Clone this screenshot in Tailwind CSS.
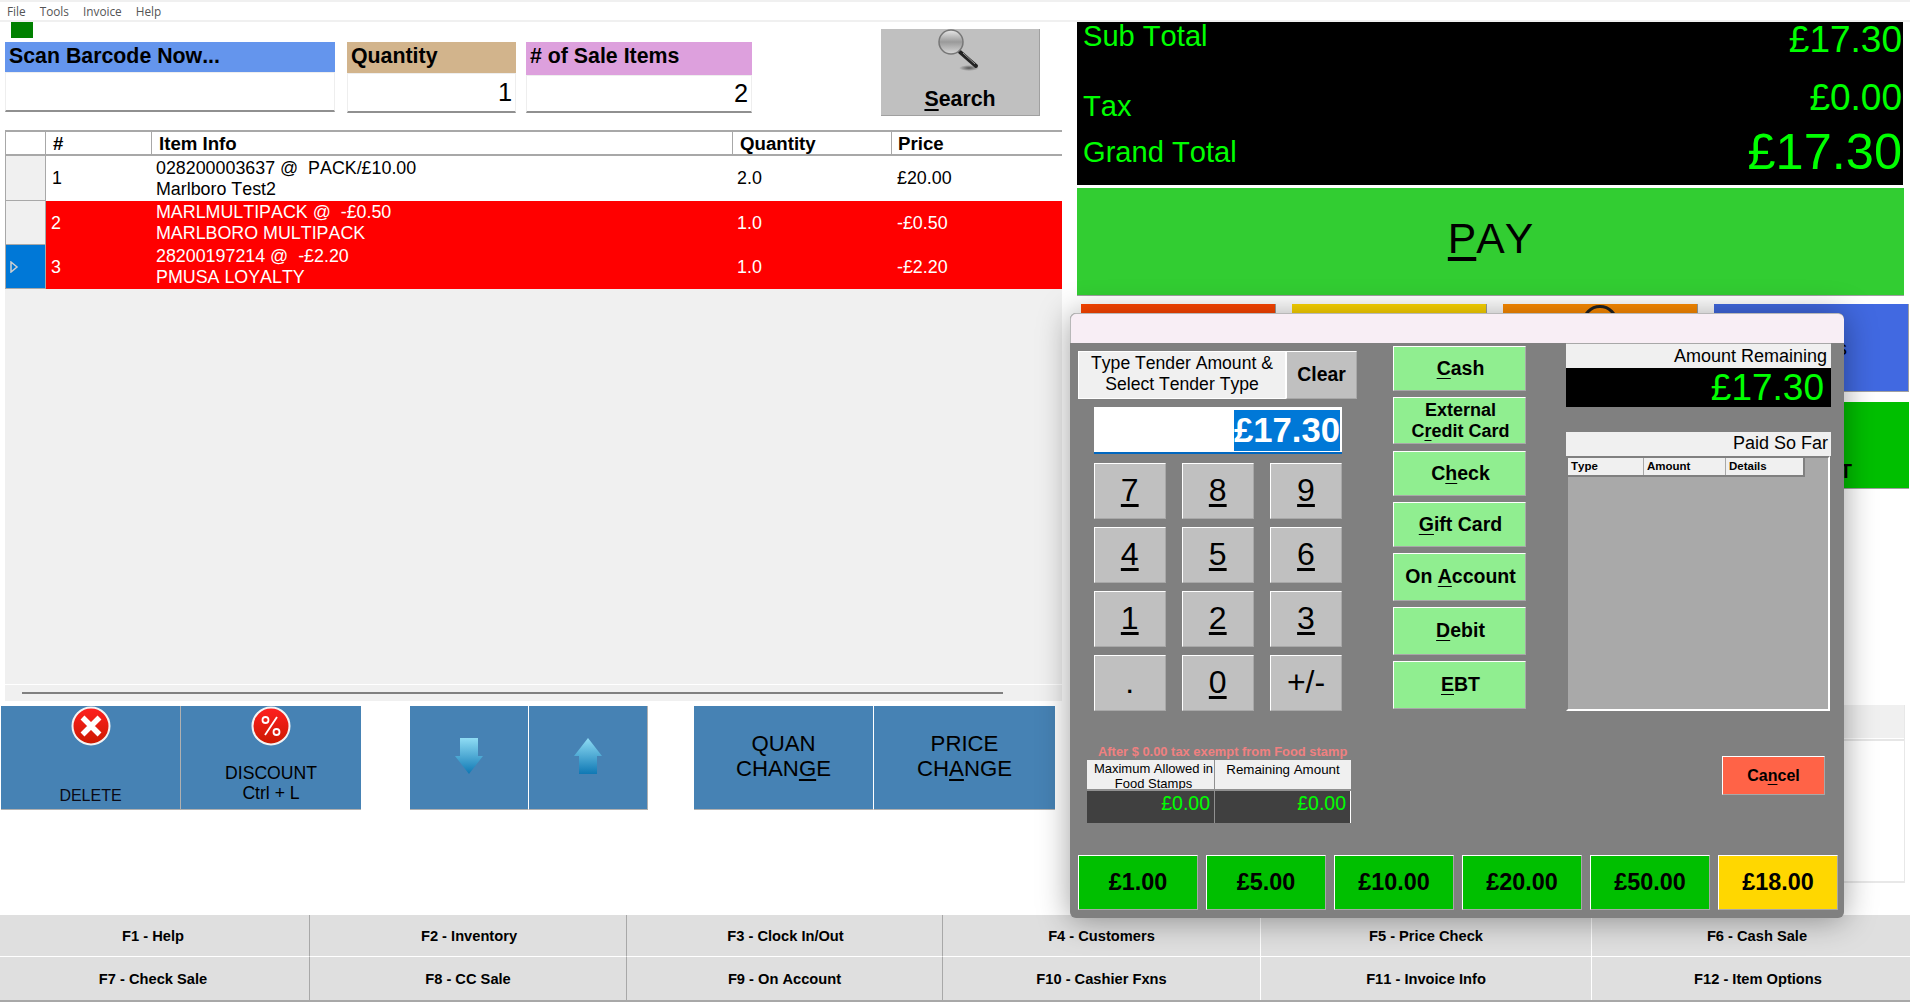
<!DOCTYPE html>
<html lang="en">
  <head>
    <meta charset="UTF-8" />
    <title>Point of Sale</title>
    <script src="https://cdn.jsdelivr.net/npm/@tailwindcss/browser@4"></script>
  </head>
  <body class="bg-white overflow-hidden">
    <div class="relative w-[1910px] h-[1008px] overflow-hidden bg-white text-black [font-kerning:none] font-['Liberation_Sans',Arial,sans-serif]">
      <!-- menu -->
      <div class="h-[22px] border-t-2 border-b-2 border-[#f0f0f0] flex items-center gap-[14px] pl-[7px] pt-px text-[11.8px] text-[#555] font-['Open_Sans',sans-serif]">
        <span>File</span><span>Tools</span><span>Invoice</span><span>Help</span>
      </div>

      <div class="flex h-[893px]">
        <!-- left side -->
        <div class="w-[1062px] shrink-0 flex flex-col">
          <div class="flex h-[108px] shrink-0">
            <div class="w-[881px] shrink-0">
              <div class="ml-[11px] w-[22px] h-[16px] bg-[#008000]"></div>
              <div class="flex items-start ml-[5px] mt-[4px]">
                <div class="w-[330px]">
                  <div class="h-[30px] bg-[#6495ed] pl-[4px] flex items-center text-[21.33px] font-bold">Scan Barcode Now...</div>
                  <div class="h-[40px] bg-white border border-[#eeeeee] border-b-2 border-b-[#909090]"></div>
                </div>
                <div class="w-[169px] ml-[12px]">
                  <div class="h-[31px] bg-[#d2b48c] pl-[4px] pb-[2px] flex items-center text-[21.33px] font-bold">Quantity</div>
                  <div class="h-[40px] bg-white border border-[#eeeeee] border-b-2 border-b-[#909090] flex items-center justify-end pr-[3px] text-[25.33px]">1</div>
                </div>
                <div class="w-[226px] ml-[10px]">
                  <div class="h-[33px] bg-[#dda0dd] pl-[4px] pb-[4px] flex items-center text-[21.33px] font-bold"># of Sale Items</div>
                  <div class="h-[38px] bg-white border border-[#eeeeee] border-b-2 border-b-[#909090] flex items-center justify-end pr-[3px] text-[25.33px]">2</div>
                </div>
              </div>
            </div>
            <button class="mt-[7px] w-[159px] h-[87px] bg-[#c0c0c0] border-b border-r border-[#a0a0a0] flex flex-col items-center">
              <svg class="w-[44px] h-[46px] ml-[-2px]" viewBox="0 0 44 46">
                <defs>
                  <linearGradient id="glass" x1="0" y1="0" x2="0" y2="1">
                    <stop offset="0" stop-color="#e8e8e8" /><stop offset="0.5" stop-color="#9a9a9a" /><stop offset="1" stop-color="#d8d8d8" />
                  </linearGradient>
                  <radialGradient id="floor"><stop offset="0" stop-color="#555" /><stop offset="1" stop-color="#c0c0c0" /></radialGradient>
                </defs>
                <ellipse cx="32" cy="39" rx="10" ry="3" fill="url(#floor)" />
                <path d="M23 23 L39 37" stroke="#222" stroke-width="4" stroke-linecap="round" />
                <path d="M26 24 L38 35" stroke="#999" stroke-width="1" />
                <circle cx="14" cy="13" r="12" fill="url(#glass)" stroke="#777" stroke-width="1.5" />
              </svg>
              <span class="mt-[12px] text-[21.33px] leading-[24px] font-bold"><span class="underline underline-offset-[3px]">S</span>earch</span>
            </button>
          </div>

          <!-- sale grid -->
          <div class="ml-[5px] h-[554px] shrink-0 bg-[#f0f0f0]">
            <div class="grid grid-cols-[40px_106px_581px_159px_1fr] border-t-2 border-l border-[#a8a8a8]">
              <div class="h-[24px] bg-white border-b-2 border-r border-[#a8a8a8]"></div>
              <div class="h-[24px] bg-white border-b-2 border-r border-[#a8a8a8] pl-[7px] text-[18.67px] leading-[24px] font-bold">#</div>
              <div class="h-[24px] bg-white border-b-2 border-r border-[#a8a8a8] pl-[7px] text-[18.67px] leading-[24px] font-bold">Item Info</div>
              <div class="h-[24px] bg-white border-b-2 border-r border-[#a8a8a8] pl-[7px] text-[18.67px] leading-[24px] font-bold">Quantity</div>
              <div class="h-[24px] bg-white border-b-2 border-[#a8a8a8] pl-[6px] text-[18.67px] leading-[24px] font-bold">Price</div>

              <div class="h-[45px] bg-[#f0f0f0] border-r border-b border-[#a8a8a8]"></div>
              <div class="h-[45px] bg-white pl-[6px] flex items-center text-[17.85px]">1</div>
              <div class="h-[45px] bg-white pl-[4px] flex flex-col justify-center text-[17.85px] leading-[21px]"><span class="whitespace-pre">028200003637 @  PACK/£10.00</span><span>Marlboro Test2</span></div>
              <div class="h-[45px] bg-white pl-[4px] flex items-center text-[17.85px]">2.0</div>
              <div class="h-[45px] bg-white pl-[5px] flex items-center text-[17.85px]">£20.00</div>

              <div class="h-[44px] bg-[#f0f0f0] border-r border-b border-[#a8a8a8]"></div>
              <div class="h-[44px] bg-[#ff0000] text-white pl-[5px] flex items-center text-[17.85px]">2</div>
              <div class="h-[44px] bg-[#ff0000] text-white pl-[4px] flex flex-col justify-center text-[17.85px] leading-[21px]"><span class="whitespace-pre">MARLMULTIPACK @  -£0.50</span><span>MARLBORO MULTIPACK</span></div>
              <div class="h-[44px] bg-[#ff0000] text-white pl-[4px] flex items-center text-[17.85px]">1.0</div>
              <div class="h-[44px] bg-[#ff0000] text-white pl-[5px] flex items-center text-[17.85px]">-£0.50</div>

              <div class="h-[44px] bg-[#0078d7] border-r border-b border-[#a8a8a8] flex items-center pl-[4px]">
                <svg class="w-[9px] h-[12px]" viewBox="0 0 9 12"><path d="M1 1 L7 6 L1 11 Z" fill="none" stroke="#d0d0d0" stroke-width="1.5" /></svg>
              </div>
              <div class="h-[44px] bg-[#ff0000] text-white pl-[5px] flex items-center text-[17.85px]">3</div>
              <div class="h-[44px] bg-[#ff0000] text-white pl-[4px] flex flex-col justify-center text-[17.85px] leading-[21px]"><span class="whitespace-pre">28200197214 @  -£2.20</span><span>PMUSA LOYALTY</span></div>
              <div class="h-[44px] bg-[#ff0000] text-white pl-[4px] flex items-center text-[17.85px]">1.0</div>
              <div class="h-[44px] bg-[#ff0000] text-white pl-[5px] flex items-center text-[17.85px]">-£2.20</div>
            </div>
          </div>

          <!-- scrollbar -->
          <div class="ml-[5px] mt-px h-[16px] bg-[#f0f0f0] flex items-center pl-[17px]">
            <div class="w-[981px] h-[2px] bg-[#808080]"></div>
          </div>

          <!-- action buttons -->
          <div class="flex mt-[5px] h-[104px] text-black">
            <div class="ml-px w-[360px] flex">
              <div class="relative w-[180px] bg-[#4682b4] border-b border-r border-[#b0b0b0] flex flex-col items-center">
                <svg class="w-[40px] h-[40px]" viewBox="0 0 40 40">
                  <defs>
                    <linearGradient id="red1" x1="0" y1="0" x2="0" y2="1"><stop offset="0" stop-color="#ff2020" /><stop offset="1" stop-color="#cc1a00" /></linearGradient>
                  </defs>
                  <circle cx="20" cy="20" r="18.5" fill="url(#red1)" stroke="#f4f4f4" stroke-width="2" />
                  <path d="M11.5 11.5 L28.5 28.5 M28.5 11.5 L11.5 28.5" stroke="#fff" stroke-width="5.5" />
                </svg>
                <span class="mt-[40px] text-[16px] leading-[20px] text-[#0a0a14]">DELETE</span>
              </div>
              <div class="w-[180px] bg-[#4682b4] border-b border-[#b0b0b0] flex flex-col items-center">
                <svg class="w-[40px] h-[40px]" viewBox="0 0 40 40">
                  <circle cx="20" cy="20" r="18.5" fill="url(#red1)" stroke="#f4f4f4" stroke-width="2" />
                  <circle cx="14.5" cy="14" r="3" fill="none" stroke="#fff" stroke-width="1.8" />
                  <circle cx="25.5" cy="26" r="3" fill="none" stroke="#fff" stroke-width="1.8" />
                  <path d="M26 11 L14 29" stroke="#fff" stroke-width="1.8" />
                </svg>
                <span class="mt-[17px] text-[17.6px] leading-[20px] text-center">DISCOUNT<br />Ctrl + L</span>
              </div>
            </div>
            <div class="ml-[49px] w-[238px] flex">
              <div class="w-[119px] bg-[#4682b4] border-b border-r border-[#b0b0b0] border-r-white flex items-center justify-center">
                <svg class="w-[30px] h-[36px] mt-[-4px]" viewBox="0 0 30 36">
                  <defs>
                    <linearGradient id="arrow" x1="0" y1="0" x2="0" y2="1"><stop offset="0" stop-color="#8fdcf4" /><stop offset="1" stop-color="#0f78b4" /></linearGradient>
                  </defs>
                  <path d="M6 0 H24 V18 H29 L15 36 L1 18 H6 Z" fill="url(#arrow)" />
                </svg>
              </div>
              <div class="w-[119px] bg-[#4682b4] border-b border-r border-[#b0b0b0] flex items-center justify-center">
                <svg class="w-[30px] h-[36px] mt-[-4px]" viewBox="0 0 30 36">
                  <path d="M15 0 L29 18 H24 V36 H6 V18 H1 Z" fill="url(#arrow)" />
                </svg>
              </div>
            </div>
            <div class="ml-[46px] w-[361px] flex">
              <div class="w-[180px] bg-[#4682b4] border-b border-r border-[#b0b0b0] border-r-white flex items-center justify-center text-center text-[22.2px] leading-[25px] pb-[3px]">
                <span>QUAN<br />CHAN<span class="underline underline-offset-[3px]">G</span>E</span>
              </div>
              <div class="w-[181px] bg-[#4682b4] border-b border-[#b0b0b0] flex items-center justify-center text-center text-[22.2px] leading-[25px] pb-[3px]">
                <span>PRICE<br />CH<span class="underline underline-offset-[3px]">A</span>NGE</span>
              </div>
            </div>
          </div>
        </div>

        <!-- right side -->
        <div class="ml-[15px] flex-1 flex flex-col">
          <div class="w-[826px] h-[164px] bg-black border-b border-white text-[#00ff00] flex justify-between pl-[6px] pr-[1px]">
            <div class="flex flex-col text-[29.1px]">
              <div class="h-[30px] flex items-center">Sub Total</div>
              <div class="h-[30px] flex items-center mt-[40px]">Tax</div>
              <div class="h-[30px] flex items-center mt-[16px]">Grand Total</div>
            </div>
            <div class="flex flex-col items-end">
              <div class="h-[36px] flex items-center text-[37px]">£17.30</div>
              <div class="h-[36px] flex items-center text-[37px] mt-[22px]">£0.00</div>
              <div class="h-[60px] flex items-center text-[50.5px] mt-[6px]">£17.30</div>
            </div>
          </div>
          <div class="mt-[2px] w-[827px] h-[108px] bg-[#32cd32] border-b border-[#a0a0a0] flex items-center justify-center pb-[7px] text-[42.67px]">
            <span><span class="underline underline-offset-[4px]">P</span>AY</span>
          </div>
          <div class="mt-[8px] ml-[4px] flex gap-[16px]">
            <div class="w-[195px] h-[88px] bg-[#ff4500] border-r border-[#a0a0a0]"></div>
            <div class="w-[195px] h-[88px] bg-[#ffd700] border-r border-[#a0a0a0]"></div>
            <div class="w-[195px] h-[88px] bg-[#ff8c00] border-r border-[#a0a0a0] flex justify-center">
              <div class="w-[36px] h-[36px] rounded-full border-[3px] border-[#222] mt-[1px]"></div>
            </div>
            <div class="w-[195px] h-[88px] bg-[#4169e1] border-b border-r border-[#a0a0a0] flex items-center justify-end pr-[61px] text-[20px]">s</div>
          </div>
          <div class="mt-[10px] ml-[4px] flex gap-[16px]">
            <div class="w-[195px] h-[87px]"></div>
            <div class="w-[195px] h-[87px]"></div>
            <div class="w-[195px] h-[87px]"></div>
            <div class="w-[195px] h-[87px] bg-[#00bf00] border-b border-[#a0a0a0] flex items-end justify-end pb-[2px] pr-[57px] text-[20px] font-bold">T</div>
          </div>
          <div class="mt-[216px] w-[828px] h-[178px] bg-white border-r border-b-2 border-[#e8e8e8]">
            <div class="h-[33px] bg-[#f0f0f0]"></div>
            <div class="h-[2px] mt-px bg-[#e6e6e6]"></div>
          </div>
        </div>
      </div>

      <!-- function keys -->
      <div class="grid grid-cols-[310px_317px_316px_318px_331px_318px] grid-rows-[42px_43px] bg-[#dfdfdf] border-b-2 border-[#a8a8a8] box-content text-[14.67px] font-bold">
        <div class="border-r border-b border-r-[#a8a8a8] border-b-white pr-[3px] flex items-center justify-center">F1 - Help</div>
        <div class="border-r border-b border-r-[#a8a8a8] border-b-white pl-[2px] flex items-center justify-center">F2 - Inventory</div>
        <div class="border-r border-b border-r-[#a8a8a8] border-b-white pl-[2px] flex items-center justify-center">F3 - Clock In/Out</div>
        <div class="border-r border-b border-r-white border-b-white flex items-center justify-center">F4 - Customers</div>
        <div class="border-r border-b border-r-white border-b-white flex items-center justify-center">F5 - Price Check</div>
        <div class="border-b border-b-white pl-[12px] flex items-center justify-center">F6 - Cash Sale</div>
        <div class="border-r border-r-[#a8a8a8] pr-[3px] flex items-center justify-center">F7 - Check Sale</div>
        <div class="border-r border-r-[#a8a8a8] flex items-center justify-center">F8 - CC Sale</div>
        <div class="border-r border-r-[#a8a8a8] flex items-center justify-center">F9 - On Account</div>
        <div class="border-r border-r-white flex items-center justify-center">F10 - Cashier Fxns</div>
        <div class="border-r border-r-white flex items-center justify-center">F11 - Invoice Info</div>
        <div class="pl-[14px] flex items-center justify-center">F12 - Item Options</div>
      </div>

      <!-- tender dialog -->
      <div class="absolute left-[1070px] top-[313px] w-[774px] h-[605px] rounded-[6px] overflow-hidden bg-[#808080] shadow-[0_2px_32px_rgba(0,0,0,0.38)]">
        <div class="h-[30px] bg-[#f8eef5] border-t border-l border-[#b8b8b8] rounded-t-[6px]"></div>
        <div class="flex h-[512px] pl-[8px]">
          <div class="w-[279px] shrink-0">
            <div class="flex mt-[8px] h-[48px]">
              <div class="w-[208px] bg-[#f0f0f0] border border-white pb-[3px] flex items-center justify-center text-center text-[17.6px] leading-[21px]">Type Tender Amount &amp;<br />Select Tender Type</div>
              <div class="w-[71px] bg-[#c0c0c0] border border-white border-b-[#a8a8a8] border-r-[#a8a8a8] flex items-center justify-center text-[19.4px] font-bold">Clear</div>
            </div>
            <div class="ml-[16px] mt-[8px] w-[248px] h-[47px] bg-white border-b-2 border-[#0067c0] flex justify-end items-start pt-[3px] pr-[2px]">
              <span class="h-[41px] bg-[#0078d7] text-white text-[34.67px] leading-[41px] font-bold">£17.30</span>
            </div>
            <div class="ml-[16px] mt-[9px] w-[248px] grid grid-cols-[71.5px_71.5px_72px] grid-rows-[56px_56px_56px_56px] gap-x-[16.5px] gap-y-[8px] text-[32px]">
              <div class="bg-[#c0c0c0] border border-white border-b-[#a8a8a8] border-r-[#a8a8a8] pb-[2px] flex items-center justify-center"><span class="underline underline-offset-[3px]">7</span></div>
              <div class="bg-[#c0c0c0] border border-white border-b-[#a8a8a8] border-r-[#a8a8a8] pb-[2px] flex items-center justify-center"><span class="underline underline-offset-[3px]">8</span></div>
              <div class="bg-[#c0c0c0] border border-white border-b-[#a8a8a8] border-r-[#a8a8a8] pb-[2px] flex items-center justify-center"><span class="underline underline-offset-[3px]">9</span></div>
              <div class="bg-[#c0c0c0] border border-white border-b-[#a8a8a8] border-r-[#a8a8a8] pb-[2px] flex items-center justify-center"><span class="underline underline-offset-[3px]">4</span></div>
              <div class="bg-[#c0c0c0] border border-white border-b-[#a8a8a8] border-r-[#a8a8a8] pb-[2px] flex items-center justify-center"><span class="underline underline-offset-[3px]">5</span></div>
              <div class="bg-[#c0c0c0] border border-white border-b-[#a8a8a8] border-r-[#a8a8a8] pb-[2px] flex items-center justify-center"><span class="underline underline-offset-[3px]">6</span></div>
              <div class="bg-[#c0c0c0] border border-white border-b-[#a8a8a8] border-r-[#a8a8a8] pb-[2px] flex items-center justify-center"><span class="underline underline-offset-[3px]">1</span></div>
              <div class="bg-[#c0c0c0] border border-white border-b-[#a8a8a8] border-r-[#a8a8a8] pb-[2px] flex items-center justify-center"><span class="underline underline-offset-[3px]">2</span></div>
              <div class="bg-[#c0c0c0] border border-white border-b-[#a8a8a8] border-r-[#a8a8a8] pb-[2px] flex items-center justify-center"><span class="underline underline-offset-[3px]">3</span></div>
              <div class="bg-[#c0c0c0] border border-white border-b-[#a8a8a8] border-r-[#a8a8a8] pb-[2px] flex items-center justify-center">.</div>
              <div class="bg-[#c0c0c0] border border-white border-b-[#a8a8a8] border-r-[#a8a8a8] pb-[2px] flex items-center justify-center"><span class="underline underline-offset-[3px]">0</span></div>
              <div class="bg-[#c0c0c0] border border-white border-b-[#a8a8a8] border-r-[#a8a8a8] pb-[2px] flex items-center justify-center">+/-</div>
            </div>
            <div class="ml-[20px] mt-[32px] h-[17px] text-[12.9px] leading-[17px] font-bold text-[#f08080] whitespace-nowrap">After $ 0.00 tax exempt from Food stamp</div>
            <div class="ml-[9px] w-[264px] grid grid-cols-[128px_136px] grid-rows-[31px_32px]">
              <div class="bg-[#f0f0f0] border-r border-b-2 border-[#909090] pl-[6px] text-center text-[13px] leading-[15px] pt-px whitespace-nowrap overflow-hidden">Maximum Allowed in<br />Food Stamps</div>
              <div class="bg-[#f0f0f0] border-b-2 border-[#909090] text-center text-[13.33px] leading-[15px] pt-[2px]">Remaining Amount</div>
              <div class="bg-[#404040] border-r border-[#909090] text-right pr-[4px] text-[#00ff00] text-[19.5px] leading-[25px]">£0.00</div>
              <div class="bg-[#404040] border-r border-white text-right pr-[4px] text-[#00ff00] text-[19.5px] leading-[25px]">£0.00</div>
            </div>
          </div>

          <div class="ml-[36px] w-[133px] shrink-0 pt-[3px] flex flex-col gap-[6px] font-bold text-[19.5px]">
            <div class="h-[45px] bg-[#90ee90] border border-white border-b-[#a8a8a8] border-r-[#a8a8a8] pl-[2px] flex items-center justify-center"><span><span class="underline underline-offset-[3px]">C</span>ash</span></div>
            <div class="h-[47px] bg-[#90ee90] border border-white border-b-[#a8a8a8] border-r-[#a8a8a8] pl-[2px] flex items-center justify-center text-center text-[18px] leading-[21px]"><span>External<br />C<span class="underline underline-offset-[3px]">r</span>edit Card</span></div>
            <div class="mt-px h-[45px] bg-[#90ee90] border border-white border-b-[#a8a8a8] border-r-[#a8a8a8] pl-[2px] flex items-center justify-center"><span>C<span class="underline underline-offset-[3px]">h</span>eck</span></div>
            <div class="h-[45px] bg-[#90ee90] border border-white border-b-[#a8a8a8] border-r-[#a8a8a8] pl-[2px] flex items-center justify-center"><span><span class="underline underline-offset-[3px]">G</span>ift Card</span></div>
            <div class="h-[48px] bg-[#90ee90] border border-white border-b-[#a8a8a8] border-r-[#a8a8a8] pl-[2px] flex items-center justify-center"><span>On <span class="underline underline-offset-[3px]">A</span>ccount</span></div>
            <div class="h-[48px] bg-[#90ee90] border border-white border-b-[#a8a8a8] border-r-[#a8a8a8] pl-[2px] flex items-center justify-center"><span><span class="underline underline-offset-[3px]">D</span>ebit</span></div>
            <div class="h-[48px] bg-[#90ee90] border border-white border-b-[#a8a8a8] border-r-[#a8a8a8] pl-[2px] flex items-center justify-center"><span><span class="underline underline-offset-[3px]">E</span>BT</span></div>
          </div>

          <div class="ml-[40px] w-[265px] shrink-0">
            <div class="h-[25px] bg-[#f0f0f0] border-t border-[#a8a8a8] text-right pr-[4px] text-[18px] leading-[24px]">Amount Remaining</div>
            <div class="h-[39px] bg-black text-[#00ff00] text-right pr-[7px] text-[37px] leading-[40px]">£17.30</div>
            <div class="mt-[25px] h-[24px] bg-[#f0f0f0] text-right pr-[3px] text-[18px] leading-[23px]">Paid So Far</div>
            <div class="w-[264px] h-[255px] bg-[#a9a9a9] border-2 border-[#808080] border-b-white border-r-white">
              <div class="flex w-[237px] h-[19px] bg-[#f0f0f0] border-b-2 border-r-2 border-[#808080] text-[11.5px] leading-[17px] font-bold">
                <div class="w-[76px] border-r border-[#a8a8a8] pl-[3px]">Type</div>
                <div class="w-[82px] border-r border-[#a8a8a8] pl-[3px]">Amount</div>
                <div class="pl-[3px]">Details</div>
              </div>
            </div>
            <div class="mt-[45px] ml-[156px] w-[103px] h-[39px] bg-[#ff6347] border border-white border-b-[#a8a8a8] border-r-[#a8a8a8] flex items-center justify-center text-[16px] font-bold"><span>Ca<span class="underline underline-offset-[3px]">n</span>cel</span></div>
          </div>
        </div>

        <div class="flex gap-[8px] pl-[8px] text-[23.4px] font-bold">
          <div class="w-[120px] h-[55px] bg-[#00bf00] border border-white border-b-[#a8a8a8] border-r-[#a8a8a8] flex items-center justify-center">£1.00</div>
          <div class="w-[120px] h-[55px] bg-[#00bf00] border border-white border-b-[#a8a8a8] border-r-[#a8a8a8] flex items-center justify-center">£5.00</div>
          <div class="w-[120px] h-[55px] bg-[#00bf00] border border-white border-b-[#a8a8a8] border-r-[#a8a8a8] flex items-center justify-center">£10.00</div>
          <div class="w-[120px] h-[55px] bg-[#00bf00] border border-white border-b-[#a8a8a8] border-r-[#a8a8a8] flex items-center justify-center">£20.00</div>
          <div class="w-[120px] h-[55px] bg-[#00bf00] border border-white border-b-[#a8a8a8] border-r-[#a8a8a8] flex items-center justify-center">£50.00</div>
          <div class="w-[120px] h-[55px] bg-[#ffd700] border border-white border-b-[#a8a8a8] border-r-[#a8a8a8] flex items-center justify-center">£18.00</div>
        </div>
      </div>
    </div>
  </body>
</html>
